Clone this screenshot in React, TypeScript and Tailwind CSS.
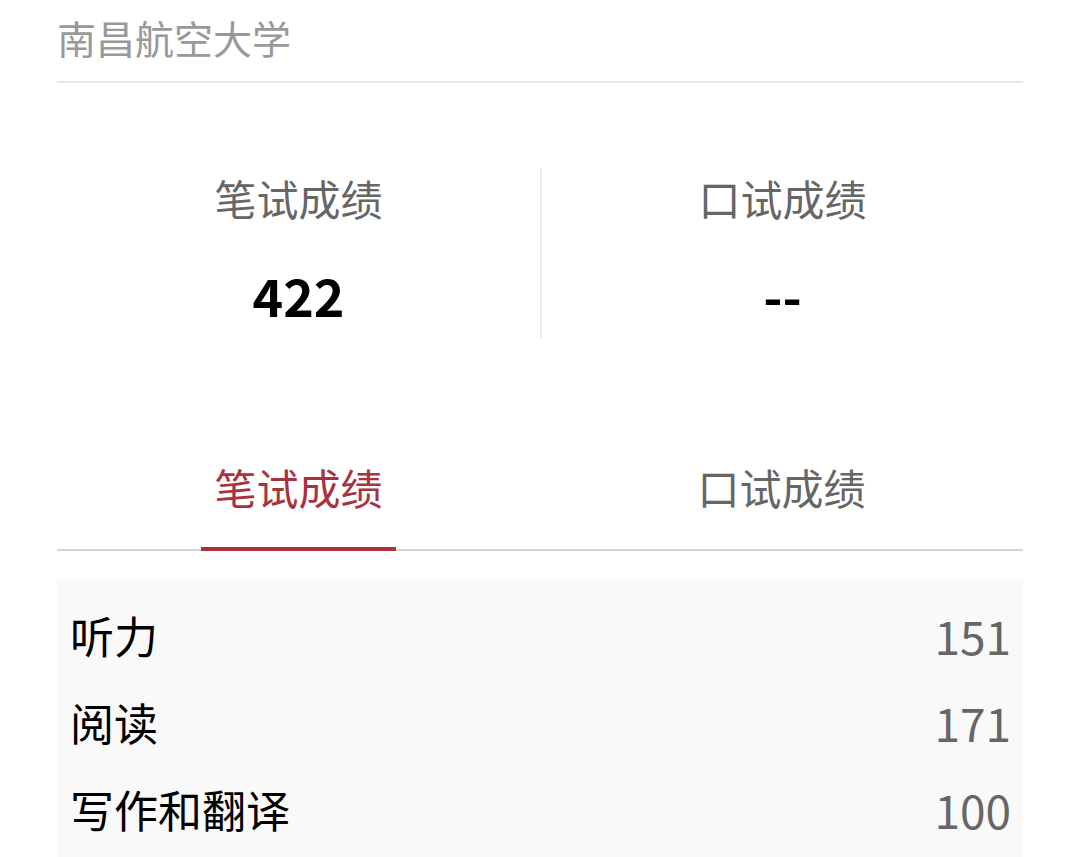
import React from "react";

const FONT = "font-['Noto_Sans_CJK_SC','Noto_Sans',sans-serif]";

const items = [
  { name: "听力", score: 151 },
  { name: "阅读", score: 171 },
  { name: "写作和翻译", score: 100 },
];

export default function App() {
  const [tab, setTab] = React.useState(0);

  return (
    <div className={`${FONT} w-[1080px] h-[857px] overflow-hidden bg-white px-[57px]`}>
      <div className="h-[83px] flex items-center border-b-2 border-[#e8e8e8]">
        <p className="text-[39px] leading-none text-[#999999] -mt-[6px]">南昌航空大学</p>
      </div>

      <div className="mt-[85px] grid grid-cols-2">
        <div className="flex flex-col items-center h-[170px]">
          <p className="text-[42px] leading-[60px] text-[#666666]">笔试成绩</p>
          <p className="mt-[37px] text-[52px] leading-[60px] font-bold text-black">422</p>
        </div>
        <div className="flex flex-col items-center h-[170px] border-l-2 border-[#ececec]">
          <p className="text-[42px] leading-[60px] text-[#666666]">口试成绩</p>
          <p className="mt-[37px] text-[52px] leading-[60px] font-bold text-black">--</p>
        </div>
      </div>

      <div className="mt-[122px] grid grid-cols-2 border-b-2 border-[#d4d4d4] h-[91px]">
        {["笔试成绩", "口试成绩"].map((t, i) => (
          <button key={t} type="button" onClick={() => setTab(i)} className="flex flex-col items-center">
            <span className={`relative h-full flex items-start px-[13px] text-[42px] leading-[54px] ${tab === i ? "text-[#a8323e]" : "text-[#666666]"}`}>
              {t}
              {tab === i && <span className="absolute left-0 right-0 -bottom-[2px] h-[4px] bg-[#a8323e]" />}
            </span>
          </button>
        ))}
      </div>

      <div className="mt-[28px] bg-[#f9f9f9] pt-[12px] pb-[20px]">
        {items.map((item) => (
          <div key={item.name} className="h-[87px] flex items-center justify-between pl-[13px] pr-[12px]">
            <span className="text-[44px] leading-none text-black">{item.name}</span>
            <span className="text-[46px] leading-none text-[#666666]">{item.score}</span>
          </div>
        ))}
      </div>
    </div>
  );
}
